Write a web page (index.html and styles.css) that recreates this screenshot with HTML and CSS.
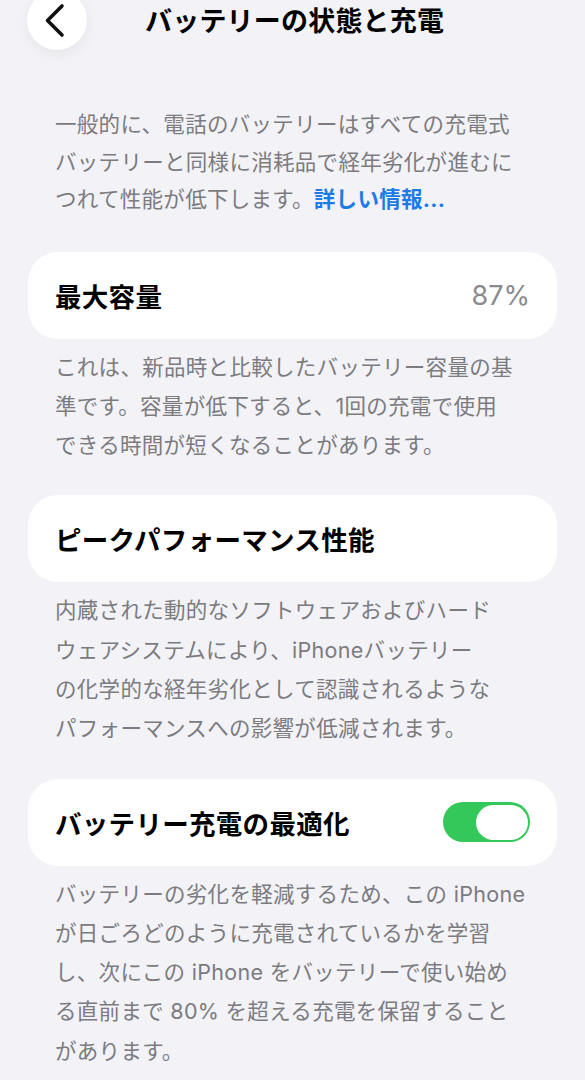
FILE: index.html
```html
<!DOCTYPE html>
<html lang="ja">
<head>
    <meta charset="UTF-8">
    <title>バッテリーの状態と充電</title>
    <link rel="stylesheet" href="styles.css">
</head>
<body>
    <div class="header">
        <a href="#" class="back">
            <svg width="60" height="60" viewBox="0 0 60 60">
                <polyline points="35,16 20.5,30.5 35,45" fill="none" stroke="#111" stroke-width="3.6" stroke-linecap="round" stroke-linejoin="round"/>
            </svg>
        </a>
        <h1>バッテリーの状態と充電</h1>
    </div>

    <div class="content">
        <p class="intro">一般的に、電話のバッテリーはすべての充電式<br>バッテリーと同様に消耗品で経年劣化が進むに<br>つれて性能が低下します。<a href="#" class="more">詳しい情報...</a></p>

        <div class="section">
            <div class="card">
                <span class="label">最大容量</span>
                <span class="value">87%</span>
            </div>
            <p class="note">これは、新品時と比較したバッテリー容量の基<br>準です。容量が低下すると、1回の充電で使用<br>できる時間が短くなることがあります。</p>
        </div>

        <div class="section">
            <div class="card">
                <span class="label">ピークパフォーマンス性能</span>
            </div>
            <p class="note">内蔵された動的なソフトウェアおよびハード<br>ウェアシステムにより、iPhoneバッテリー<br>の化学的な経年劣化として認識されるような<br>パフォーマンスへの影響が低減されます。</p>
        </div>

        <div class="section">
            <div class="card">
                <span class="label">バッテリー充電の最適化</span>
                <span class="switch on"><span class="knob"></span></span>
            </div>
            <p class="note">バッテリーの劣化を軽減するため、この iPhone<br>が日ごろどのように充電されているかを学習<br>し、次にこの iPhone をバッテリーで使い始め<br>る直前まで 80% を超える充電を保留すること<br>があります。</p>
        </div>
    </div>
</body>
</html>
```

FILE: styles.css
```css
body {
    margin: 0;
    background-color: #f2f2f7;
    font-family: 'Inter', 'Noto Sans CJK JP', sans-serif;
    color: #000;
    overflow: hidden;
}

.header {
    display: flex;
    align-items: flex-start;
    height: 50px;
    padding-left: 27px;
}

.back {
    display: block;
    width: 60px;
    height: 60px;
    margin-top: -10px;
    border-radius: 50%;
    background: #fff;
    box-shadow: 0 4px 14px rgba(0,0,0,0.06);
}

.back svg {
    display: block;
}

.header h1 {
    margin: 3px 0 0 58px;
    font-size: 27px;
    line-height: 38px;
    font-weight: 700;
    letter-spacing: 0.2px;
}

.content {
    padding: 0 28px;
}

.intro {
    margin: 56px 0 0;
    padding: 0 0 0 27px;
    font-size: 21.5px;
    line-height: 37.5px;
    letter-spacing: 0.3px;
    color: #7b7b80;
    white-space: nowrap;
}

.more {
    color: #1d7ae6;
    font-weight: 700;
    text-decoration: none;
}

.section {
    margin-top: 33px;
}

.section + .section {
    margin-top: 30px;
}

.card {
    display: flex;
    align-items: center;
    justify-content: space-between;
    height: 87px;
    padding: 0 27px;
    background: #fff;
    border-radius: 30px;
}

.label {
    font-size: 26.5px;
    font-weight: 700;
    letter-spacing: 0.3px;
}

.value {
    font-size: 27px;
    color: #8a8a8e;
}

.note {
    margin: 9px 0 0;
    padding-left: 27px;
    font-size: 21.5px;
    line-height: 39.3px;
    letter-spacing: 0.3px;
    color: #7b7b80;
    white-space: nowrap;
}

.switch {
    display: flex;
    width: 87px;
    height: 40px;
    border-radius: 20px;
    background: #d9d9de;
    padding: 2.5px;
    box-sizing: border-box;
}

.switch.on {
    background: #34c759;
    justify-content: flex-end;
}

.knob {
    width: 52px;
    height: 35px;
    border-radius: 18px;
    background: #fff;
}
```
